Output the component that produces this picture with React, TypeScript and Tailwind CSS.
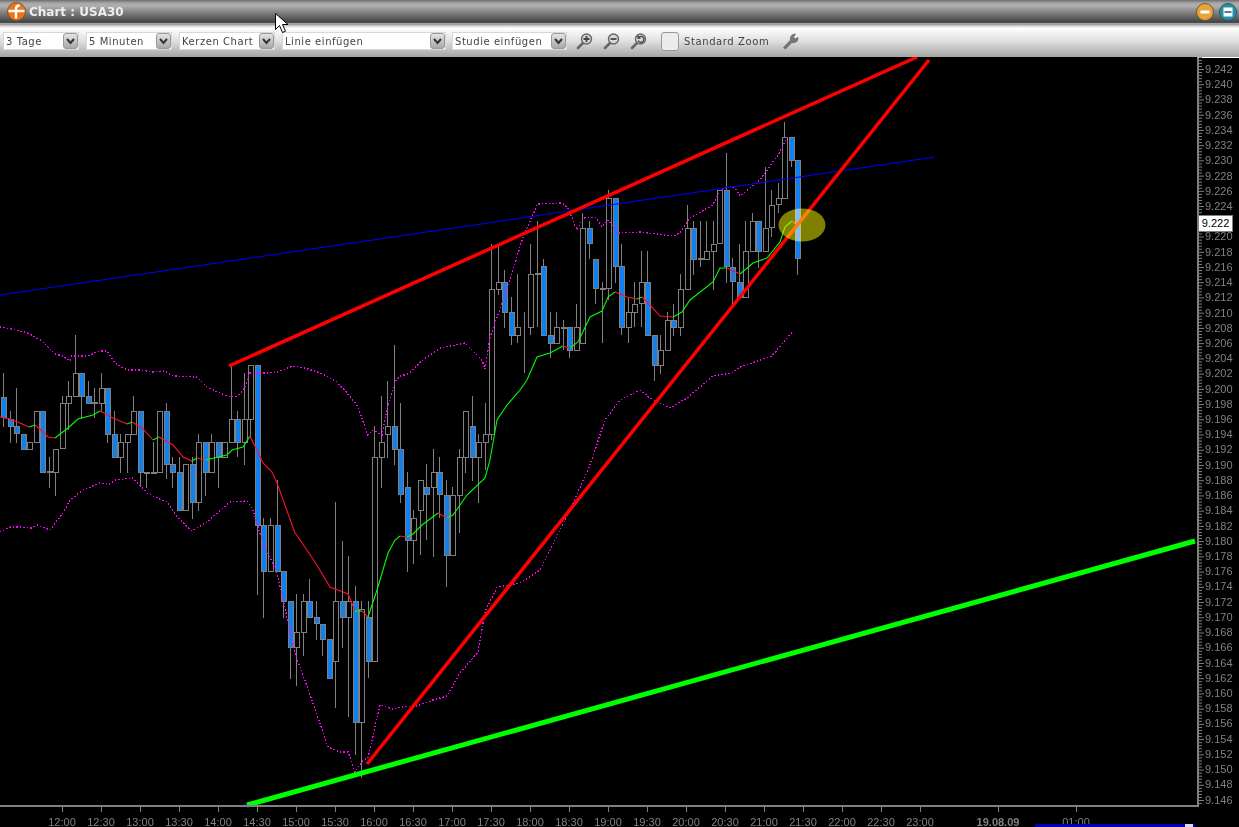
import React from 'react';

// x, wick top, wick bottom, body top, body bottom, blue (screen px)
type Candle = [number, number, number, number, number, number];

const candles: Candle[] = [
  [3, 373, 427, 397, 417, 1], [10, 411, 443, 419, 426, 1], [16, 388, 443, 426, 433, 1], [23, 434, 449, 434, 449, 1],
  [29, 442, 449, 442, 449, 0], [36, 411, 442, 411, 442, 0], [42, 411, 472, 411, 472, 1], [49, 457, 488, 471, 472, 0],
  [55, 449, 496, 449, 472, 0], [62, 396, 448, 403, 448, 0], [68, 381, 430, 396, 403, 0], [75, 335, 397, 373, 396, 0],
  [81, 373, 419, 373, 396, 1], [88, 381, 403, 396, 403, 1], [94, 388, 418, 402, 403, 0], [101, 373, 411, 388, 403, 0],
  [107, 388, 443, 388, 434, 1], [114, 411, 457, 434, 457, 1], [120, 434, 473, 442, 457, 0], [127, 434, 473, 434, 442, 0],
  [133, 396, 434, 411, 434, 0], [140, 411, 487, 411, 472, 1], [146, 472, 488, 472, 473, 0], [153, 442, 473, 472, 473, 0],
  [159, 411, 472, 411, 472, 0], [166, 403, 479, 411, 464, 1], [172, 457, 488, 464, 472, 1], [179, 457, 511, 472, 510, 1],
  [185, 464, 510, 464, 510, 0], [192, 457, 519, 464, 502, 1], [198, 434, 511, 442, 502, 0], [205, 442, 496, 442, 472, 1],
  [211, 434, 473, 442, 472, 0], [218, 442, 488, 442, 457, 1], [224, 442, 457, 442, 457, 0], [231, 365, 442, 419, 442, 0],
  [237, 411, 457, 419, 442, 1], [244, 373, 465, 419, 442, 0], [250, 365, 437, 365, 419, 0], [257, 365, 595, 365, 525, 1],
  [263, 518, 618, 525, 571, 1], [270, 518, 571, 525, 571, 0], [277, 480, 571, 525, 571, 1], [283, 571, 618, 571, 601, 1],
  [290, 601, 679, 601, 647, 1], [296, 594, 686, 632, 647, 0], [303, 594, 656, 601, 632, 0], [309, 579, 617, 601, 617, 1],
  [316, 601, 640, 617, 623, 1], [322, 624, 656, 624, 639, 1], [329, 639, 678, 639, 678, 1], [335, 502, 708, 601, 661, 0],
  [342, 541, 648, 601, 617, 1], [348, 556, 717, 601, 617, 0], [355, 586, 755, 601, 722, 1], [361, 601, 778, 609, 722, 0],
  [368, 601, 678, 617, 661, 1], [374, 426, 662, 457, 661, 0], [381, 396, 488, 442, 457, 0], [387, 381, 458, 426, 434, 0],
  [394, 345, 465, 426, 449, 1], [400, 403, 503, 449, 494, 1], [407, 472, 572, 487, 540, 1], [413, 510, 564, 518, 540, 0],
  [420, 480, 555, 480, 510, 0], [426, 464, 540, 487, 494, 1], [433, 449, 557, 472, 487, 0], [439, 457, 518, 472, 494, 1],
  [446, 480, 587, 495, 555, 1], [452, 487, 556, 495, 555, 0], [459, 449, 533, 457, 495, 0], [465, 411, 473, 411, 457, 0],
  [472, 396, 481, 426, 457, 1], [478, 434, 503, 442, 457, 0], [485, 403, 470, 434, 442, 0], [491, 244, 440, 289, 434, 0],
  [498, 246, 295, 282, 289, 0], [504, 270, 328, 282, 312, 1], [511, 297, 345, 312, 335, 1], [517, 274, 343, 327, 335, 0],
  [524, 312, 373, 312, 312, 0], [530, 244, 335, 274, 327, 0], [537, 221, 327, 273, 274, 0], [543, 259, 336, 266, 335, 1],
  [550, 312, 358, 335, 343, 1], [556, 312, 343, 327, 343, 0], [563, 320, 350, 327, 328, 0], [569, 327, 358, 327, 350, 1],
  [576, 304, 350, 327, 350, 0], [582, 213, 343, 228, 343, 0], [589, 221, 259, 228, 243, 1], [595, 259, 304, 259, 288, 1],
  [602, 282, 343, 288, 289, 0], [608, 190, 300, 198, 288, 0], [615, 198, 283, 198, 266, 1], [621, 244, 335, 266, 327, 1],
  [628, 297, 343, 312, 327, 0], [634, 282, 327, 304, 312, 0], [641, 251, 327, 282, 303, 0], [647, 251, 336, 282, 335, 1],
  [654, 335, 381, 335, 365, 1], [660, 335, 374, 350, 365, 0], [667, 312, 350, 320, 350, 0], [673, 304, 336, 320, 327, 1],
  [680, 274, 336, 289, 327, 0], [687, 205, 289, 228, 289, 0], [693, 221, 275, 228, 259, 1], [700, 221, 267, 258, 259, 0],
  [706, 221, 259, 251, 259, 0], [713, 221, 290, 244, 251, 0], [719, 190, 243, 190, 243, 0], [726, 153, 283, 190, 266, 1],
  [732, 258, 305, 267, 281, 1], [739, 244, 297, 282, 297, 1], [745, 221, 297, 251, 297, 0], [752, 213, 251, 221, 251, 0],
  [758, 221, 268, 221, 251, 1], [765, 167, 251, 228, 251, 0], [771, 190, 237, 205, 227, 0], [778, 183, 213, 198, 204, 0],
  [784, 122, 198, 137, 198, 0], [791, 137, 167, 137, 160, 1], [797, 160, 275, 160, 258, 1],
];

const pts = (list: number[][]) => list.map(p => p.join(',')).join(' ');

const upperBand = [
  [0, 327], [12, 329], [28, 333], [42, 341], [55, 354], [63, 356], [70, 361], [72, 356], [87, 356], [100, 351], [107, 351],
  [115, 363], [127, 370], [140, 370], [153, 372], [165, 371], [173, 376], [197, 377], [207, 387], [220, 393], [230, 397],
  [238, 396], [245, 387], [250, 373], [268, 373], [278, 372], [293, 366], [305, 368], [323, 374], [337, 382], [347, 393],
  [357, 405], [368, 435], [373, 430], [382, 435], [387, 410], [395, 382], [400, 376], [408, 374], [423, 360], [440, 348],
  [465, 343], [482, 360], [485, 369], [490, 337], [510, 280], [523, 237], [535, 210], [537, 204], [562, 203], [568, 208],
  [577, 230], [583, 218], [595, 217], [602, 227], [608, 220], [618, 233], [640, 232], [673, 236], [680, 233], [690, 218],
  [713, 205], [720, 190], [727, 187], [735, 188], [740, 196], [760, 180], [780, 152], [787, 137],
];

const lowerBand = [
  [0, 532], [10, 527], [20, 527], [32, 528], [37, 525], [50, 530], [63, 513], [70, 500], [83, 490], [100, 483], [110, 484],
  [115, 480], [133, 478], [147, 493], [157, 498], [167, 502], [177, 517], [192, 531], [207, 522], [230, 502], [247, 501],
  [253, 510], [262, 540], [277, 573], [295, 653], [313, 703], [328, 747], [340, 752], [348, 752], [355, 772], [363, 760],
  [368, 758], [380, 705], [393, 709], [403, 707], [417, 706], [433, 700], [447, 696], [460, 673], [478, 652], [485, 612],
  [497, 587], [520, 583], [540, 570], [570, 510], [590, 465], [605, 420], [620, 400], [640, 390], [650, 398], [670, 408],
  [687, 398], [713, 376], [732, 373], [740, 367], [772, 356], [787, 338], [792, 332],
];

const red = '#ff1030';
const green = '#00ff00';

// moving average, alternates between red (falling) and green (rising)
const average: [string, number[][]][] = [
  [red, [[0, 417], [10, 419], [20, 423], [29, 427]]],
  [green, [[29, 427], [35, 425]]],
  [red, [[35, 425], [42, 431], [48, 437], [55, 438]]],
  [green, [[55, 438], [68, 428], [78, 419], [93, 415], [100, 411]]],
  [red, [[100, 411], [113, 418], [127, 424]]],
  [green, [[127, 424], [132, 422]]],
  [red, [[132, 422], [142, 428], [153, 440]]],
  [green, [[153, 440], [159, 437]]],
  [red, [[159, 437], [173, 445], [183, 457], [192, 461]]],
  [green, [[192, 461], [197, 458]]],
  [red, [[197, 458], [205, 460]]],
  [green, [[205, 460], [227, 455], [232, 450], [243, 447], [250, 436]]],
  [red, [[250, 436], [263, 463], [272, 472], [277, 483], [295, 533], [300, 540], [315, 562], [330, 587], [348, 594], [355, 611]]],
  [green, [[355, 611], [362, 611]]],
  [red, [[362, 611], [368, 617]]],
  [green, [[368, 617], [377, 590], [388, 553], [395, 540], [400, 536]]],
  [red, [[400, 536], [407, 537]]],
  [green, [[407, 537], [413, 534], [422, 525], [430, 519], [438, 513]]],
  [red, [[438, 513], [447, 518]]],
  [green, [[447, 518], [453, 515], [467, 495], [485, 478], [490, 460], [497, 420], [507, 405], [520, 390], [527, 380], [537, 357], [550, 353], [563, 346]]],
  [red, [[563, 346], [570, 348]]],
  [green, [[570, 348], [578, 342], [590, 317], [602, 311], [608, 297], [615, 292]]],
  [red, [[615, 292], [627, 297], [637, 299]]],
  [green, [[637, 299], [642, 297]]],
  [red, [[642, 297], [650, 305], [660, 316], [673, 317]]],
  [green, [[673, 317], [682, 312], [690, 300], [713, 282], [720, 268], [727, 268]]],
  [red, [[727, 268], [740, 274]]],
  [green, [[740, 274], [753, 263], [767, 258], [780, 242], [785, 227], [792, 221]]],
  [red, [[792, 221], [797, 226]]],
];

const prices = Array.from({ length: 49 }, (_, i) => (9.242 - i * 0.002).toFixed(3));
const axisTicks = Array.from({ length: 246 }, (_, i) => i);

const times = [
  '12:00', '12:30', '13:00', '13:30', '14:00', '14:30', '15:00', '15:30', '16:00', '16:30', '17:00', '17:30',
  '18:00', '18:30', '19:00', '19:30', '20:00', '20:30', '21:00', '21:30', '22:00', '22:30', '23:00', '', '19.08.09', '', '01:00',
];

function Select({ label, width }: { label: string; width: string }) {
  return (
    <div className={`${width} h-[18px] bg-white border border-[#d8d8d8] flex items-center justify-between pl-[2px]`}>
      <span className="whitespace-nowrap text-[10px] tracking-[0.55px] text-[#444]">{label}</span>
      <span className="w-[15px] h-[16px] rounded-[3px] border border-[#999] bg-[linear-gradient(#e4e4e4,#a8a8a8)] flex items-center justify-center shrink-0">
        <svg width="9" height="7" viewBox="0 0 9 7" fill="none" stroke="#333" strokeWidth="2">
          <path d="M1 1l3.5 4L8 1" />
        </svg>
      </span>
    </div>
  );
}

function Magnifier({ kind }: { kind: 'plus' | 'minus' | 'reset' }) {
  return (
    <svg width="18" height="18" viewBox="0 0 18 18" fill="none">
      <path d="M7 11l-5 5" stroke="#666" strokeWidth="2.6" strokeLinecap="round" />
      <circle cx="10.5" cy="7" r="5" fill="#d8d8d8" stroke="#666" strokeWidth="1.4" />
      {kind === 'plus' && <path d="M7.500 7h6M10.500 4v6" stroke="#444" strokeWidth="1.800" />}
      {kind === 'minus' && <path d="M7.500 7h6" stroke="#444" strokeWidth="1.800" />}
      {kind === 'reset' && <path d="M8.500 5.500a3 3 0 1 1-.4 3M8 3.600v2.400h2.400" stroke="#444" strokeWidth="1.300" />}
    </svg>
  );
}

function Chart() {
  return (
    <svg className="block" width="1197" height="755" viewBox="0 57 1197 755">
      <g shapeRendering="crispEdges">
        {candles.map(([x, wt, wb, bt, bb, blue]) => (
          <g key={x}>
            <line x1={x + 0.5} x2={x + 0.5} y1={wt} y2={wb} stroke="#808080" />
            <rect x={x - 2} y={bt + 0.5} width={5} height={Math.max(bb - bt, 0)} fill={blue ? '#0f80ee' : '#000'} stroke="#808080" />
          </g>
        ))}
      </g>
      <polyline points={pts(upperBand)} fill="none" stroke="#ff00ff" strokeWidth="1.3" strokeDasharray="1.5 2" shapeRendering="crispEdges" />
      <polyline points={pts(lowerBand)} fill="none" stroke="#ff00ff" strokeWidth="1.3" strokeDasharray="1.5 2" shapeRendering="crispEdges" />
      {average.map(([color, line], i) => (
        <polyline key={i} points={pts(line)} fill="none" stroke={color} strokeWidth="1.1" />
      ))}
      <line x1="0" y1="295" x2="935" y2="157" stroke="#0000ff" />
      <line x1="243" y1="805" x2="248" y2="804" stroke="#0000ff" />
      <line x1="229" y1="366" x2="917" y2="57" stroke="#ff0000" strokeWidth="3.5" />
      <line x1="367" y1="764" x2="929" y2="60" stroke="#ff0000" strokeWidth="3.5" />
      <line x1="247" y1="805" x2="1195" y2="541" stroke="#00ff00" strokeWidth="5" />
      <ellipse cx="802" cy="225" rx="23.5" ry="16.5" fill="#808000" className="mix-blend-screen" />
      <rect x="0" y="805" width="1197" height="2" fill="#808080" />
      {times.map((t, i) =>
        t ? <rect key={i} x={62 + i * 39} y="807" width="1" height="5" fill="#808080" /> : null,
      )}
    </svg>
  );
}

export default function App() {
  return (
    <div className="relative w-[1239px] h-[827px] overflow-hidden bg-black flex flex-col font-['DejaVu_Sans',sans-serif]">
      {/* Title bar */}
      <div className="h-[23px] shrink-0 flex items-center justify-between pl-[7px] pr-[2px] bg-[linear-gradient(#6e6e6e_0px,#a6a6a6_3px,#b0b0b0_6px,#8a8a8a_11px,#4a4a4a_21px,#4a4a4a_23px)]">
        <div className="flex items-center gap-[3px]">
          <svg width="19" height="19" viewBox="0 0 19 19">
            <circle cx="9.500" cy="9.500" r="9" fill="#ee7318" stroke="#7a4a20" strokeWidth="0.8" />
            <path d="M1.500 9h16M9 16.500V6.500c0-2 1.200-3 3.800-3" fill="none" stroke="#fff" strokeWidth="2.400" />
          </svg>
          <span className="text-[12px] font-bold text-[#eeeeee] whitespace-nowrap">Chart : USA30</span>
        </div>
        <div className="flex items-center gap-[5px]">
          <svg width="18" height="18" viewBox="0 0 18 18">
            <circle cx="9" cy="9" r="8.500" fill="#e8a33c" stroke="#6e5a30" />
            <rect x="4.500" y="7.500" width="9" height="3" fill="#fff" />
          </svg>
          <svg width="18" height="18" viewBox="0 0 18 18">
            <circle cx="9" cy="9" r="8.500" fill="#2a8ca8" stroke="#2a5a68" />
            <rect x="4.500" y="4.500" width="9" height="9" fill="#fff" />
            <rect x="5.500" y="8" width="7" height="2" fill="#2a8ca8" />
          </svg>
        </div>
      </div>

      {/* Toolbar */}
      <div className="h-[34px] shrink-0 flex items-center pl-[3px] pt-[2px] bg-[linear-gradient(#c4c4c4_0px,#808080_1px,#bcbcbc_2px,#ffffff_5px,#e0e0e0_18px,#a8a8a8_33px)]">
        <div className="flex items-center gap-[7px]">
          <Select label="3 Tage" width="w-[76px]" />
          <Select label="5 Minuten" width="w-[86px]" />
          <Select label="Kerzen Chart" width="w-[96px]" />
          <Select label="Linie einfügen" width="w-[164px]" />
        </div>
        <div className="ml-[6px]">
          <Select label="Studie einfügen" width="w-[115px]" />
        </div>
        <div className="ml-[9px] flex items-center gap-[9px]">
          <Magnifier kind="plus" />
          <Magnifier kind="minus" />
          <Magnifier kind="reset" />
        </div>
        <div className="ml-[13px] w-[18px] h-[19px] rounded-[3px] border border-[#999] bg-[#ececec]" />
        <span className="ml-[5px] text-[10px] tracking-[0.6px] text-[#444] whitespace-nowrap">Standard Zoom</span>
        <svg className="ml-[13px]" width="18" height="18" viewBox="0 0 18 18">
          <path d="M1.500 15.500l7-7.500c-.8-3 1.200-6 5-6l-2 3 1.500 2 3-1.500c.5 3.500-2.500 6-6 5l-6.500 6.500z" fill="#777" stroke="#555" strokeWidth="0.6" />
        </svg>
      </div>

      {/* Chart and axes */}
      <div className="relative flex-1 flex min-h-0">
        <div className="w-[1197px] shrink-0 flex flex-col">
          <Chart />
          <div className="h-[15px] overflow-hidden flex pl-[42.5px] pt-[5px] font-['Liberation_Sans',sans-serif] text-[11px] leading-none text-[#808080]">
            {times.map((t, i) => (
              <span key={i} className={`w-[39px] shrink-0 flex justify-center whitespace-nowrap ${t === '19.08.09' ? 'font-bold' : ''}`}>
                {t}
              </span>
            ))}
          </div>
        </div>
        <div className="flex-1 flex border-l-2 border-[#808080] border-t border-t-white h-[750px]">
          <svg className="shrink-0 -mt-px" width="6" height="750" viewBox="0 57 6 750">
            {axisTicks.map(i => (
              <rect key={i} x="0" y={69 - 12.18 + i * 3.046} width={i % 5 === 4 ? 5 : 3} height="1" fill="#808080" />
            ))}
          </svg>
          <div className="flex flex-col pt-[4px] font-['Liberation_Sans',sans-serif] text-[11px] text-[#808080]">
            {prices.map(p => (
              <span key={p} className="h-[15.23px] leading-[15px] shrink-0">{p === '9.222' ? '' : p}</span>
            ))}
          </div>
        </div>
        {/* Last price marker */}
        <div className="absolute left-[1198px] top-[158px] w-[35px] h-[17px] bg-white border border-[#808080] flex items-center justify-center font-['Liberation_Sans',sans-serif] text-[11px] text-black">
          9.222
        </div>
      </div>

      {/* Strip of the window below */}
      <div className="absolute left-[1035px] top-[824px] w-[160px] h-[3px] bg-[#0000b0] flex justify-end pr-[2px]">
        <div className="w-[8px] h-[3px] bg-[#d8d8f0]" />
      </div>

      {/* Mouse pointer */}
      <svg className="absolute left-[275px] top-[13px]" width="14" height="21" viewBox="0 0 14 21">
        <path d="M.5.500v16l4-4 3 7 3-1.300-3-6.700h5.500z" fill="#fff" stroke="#000" />
      </svg>
    </div>
  );
}
